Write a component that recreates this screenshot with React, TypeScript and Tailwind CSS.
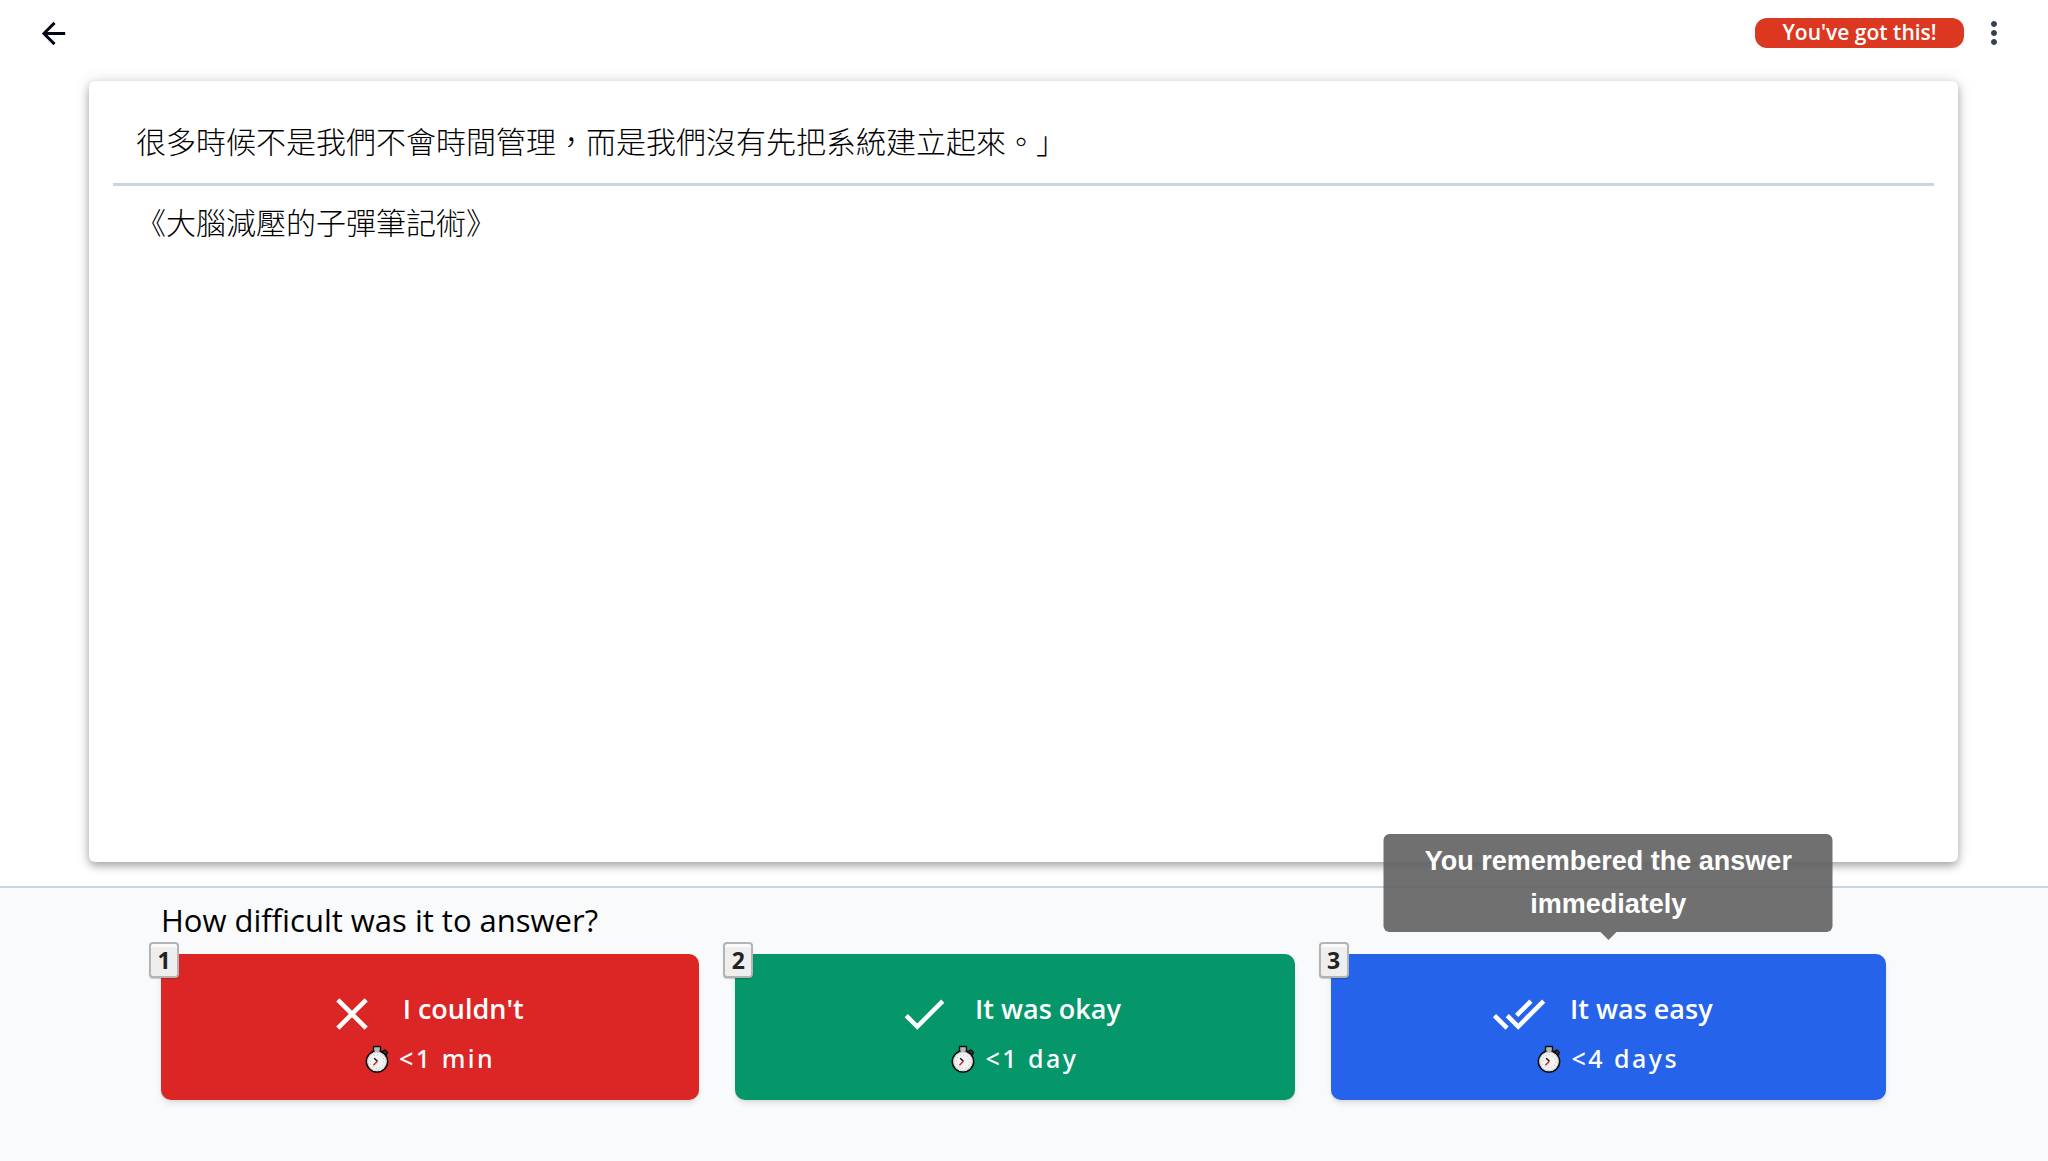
import type { ReactNode } from "react";
import { MdArrowBack, MdClose, MdDone, MdDoneAll, MdMoreVert } from "react-icons/md";

type Answer = {
  hotkey: string;
  label: string;
  due: string;
  color: string;
  icon: ReactNode;
  hint?: string;
};

const answers: Answer[] = [
  {
    hotkey: "1",
    label: "I couldn't",
    due: "<1 min",
    color: "bg-[#dc2626]",
    icon: <MdClose className="size-[54px]" />,
  },
  {
    hotkey: "2",
    label: "It was okay",
    due: "<1 day",
    color: "bg-[#059669]",
    icon: <MdDone className="size-[54px]" />,
  },
  {
    hotkey: "3",
    label: "It was easy",
    due: "<4 days",
    color: "bg-[#2563eb]",
    icon: <MdDoneAll className="size-[54px]" />,
    hint: "You remembered the answer immediately",
  },
];

function Stopwatch() {
  return (
    <svg viewBox="0 0 24 28" className="h-7 w-6" aria-hidden="true">
      <path d="M17.500 6.500l2.500-1.500 2.500 2.500-1.500 2.500z" fill="#444" stroke="#111" strokeWidth="1.500" strokeLinejoin="round" />
      <circle cx="12" cy="16.500" r="10.600" fill="#f4f4f4" stroke="#111" strokeWidth="1.700" />
      <path d="M8.500 1.500h7v4.500h-7z" fill="#b8b8b8" stroke="#111" strokeWidth="1.400" strokeLinejoin="round" />
      <path d="M9.500 4.500h5v2.500h-5z" fill="#b8b8b8" />
      <circle cx="12" cy="16.500" r="9.200" fill="none" stroke="#d0d0d0" strokeWidth="1" />
      <circle cx="12" cy="16.500" r="6.800" fill="none" stroke="#c4c4c4" strokeWidth="1.200" strokeDasharray="1 2.560" />
      <path d="M9.200 13.300l3.200 3" stroke="#111" strokeWidth="1.500" />
      <path d="M12.400 16.300l-4 4" stroke="#e11d2a" strokeWidth="1.500" />
    </svg>
  );
}

function AnswerButton({ answer }: { answer: Answer }) {
  return (
    <div className="relative">
      <button
        type="button"
        className={`flex w-full flex-col items-center rounded-[10px] pt-6 pb-6 text-white shadow-md ${answer.color}`}
      >
        <span className="flex h-16 items-center gap-6 pr-3">
          <span className="pt-2">{answer.icon}</span>
          <span className="pb-0.5 text-[27px] leading-[60px] font-semibold">{answer.label}</span>
        </span>
        <span className="flex h-[34px] items-center gap-2.5">
          <Stopwatch />
          <span className="pb-0.5 font-['Noto_Sans',sans-serif] text-[25px] leading-8 font-medium tracking-widest">
            {answer.due}
          </span>
        </span>
      </button>
      <kbd className="absolute -top-3 -left-3 flex h-9 w-[30px] items-center justify-center rounded-[4px] border-2 border-[#b4b4b4] bg-[#eee] font-['Open_Sans',sans-serif] text-[23px] leading-none font-bold text-[#222] shadow-[0_1px_1px_rgba(0,0,0,0.2),inset_0_3px_0_rgba(255,255,255,0.7)]">
        {answer.hotkey}
      </kbd>
      {answer.hint && (
        <div
          role="tooltip"
          className="absolute bottom-full left-1/2 mb-[22px] w-[449px] -translate-x-1/2 rounded-md bg-[#616161]/90 px-8 py-1.5 text-center font-['Liberation_Sans',sans-serif] text-[27px] leading-[43px] font-bold text-white"
        >
          {answer.hint}
          <span className="absolute top-full left-1/2 -translate-x-1/2 border-x-8 border-t-8 border-x-transparent border-t-[#616161]/90" />
        </div>
      )}
    </div>
  );
}

export default function App() {
  return (
    <div className="flex min-h-screen flex-col bg-white font-['Open_Sans','Noto_Sans_CJK_TC',sans-serif] text-black">
      <header className="flex h-[66px] items-center justify-between px-9">
        <a href="#" aria-label="Back" className="text-[#020617]">
          <MdArrowBack className="size-[35px]" />
        </a>
        <div className="flex items-center gap-3">
          <span className="flex h-[30px] w-[209px] items-center justify-center rounded-xl bg-[#dc3720] text-[21px] font-semibold text-white">
            You've got this!
          </span>
          <button type="button" aria-label="More options" className="text-[#334155]">
            <MdMoreVert className="size-9" />
          </button>
        </div>
      </header>

      <main className="flex grow flex-col pr-[90px] pl-[89px] pt-[15px] pb-6">
        <article
          lang="zh-Hant"
          className="grow rounded-md bg-white px-6 pt-[34px] font-['Noto_Sans_CJK_TC',sans-serif] text-[30px] leading-[50px] font-light shadow-[0_4px_8px_rgba(0,0,0,0.3),0_0_16px_rgba(0,0,0,0.12)]"
        >
          <p className="px-[23px] pb-[18px]">很多時候不是我們不會時間管理，而是我們沒有先把系統建立起來。」</p>
          <hr className="border-t-[3px] border-[#cbd5e1]" />
          <p className="px-[23px] pt-[10px]">《大腦減壓的子彈筆記術》</p>
        </article>
      </main>

      <section className="border-t-2 border-[#cbd5e1] bg-[#f8fafc] pr-[162px] pl-[161px] pt-[10px] pb-[61px]">
        <h2 className="pb-3 text-[31px] leading-[44px]">How difficult was it to answer?</h2>
        <div className="grid grid-cols-[538fr_559fr_555fr] gap-9">
          {answers.map((answer) => (
            <AnswerButton key={answer.hotkey} answer={answer} />
          ))}
        </div>
      </section>
    </div>
  );
}
